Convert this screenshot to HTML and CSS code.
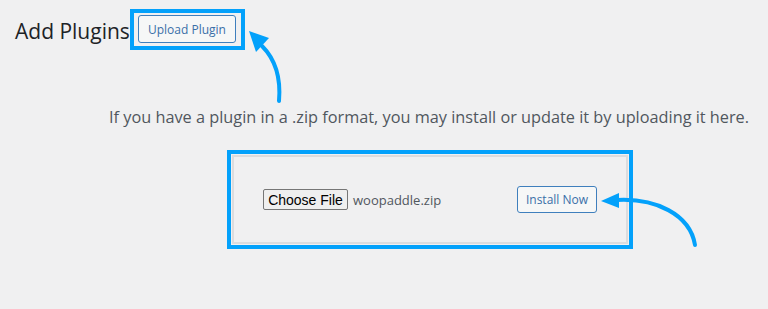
FILE: index.html
```html
<!DOCTYPE html>
<html lang="en">

<head>
  <meta charset="UTF-8">
  <title>Add Plugins</title>
  <link rel="stylesheet" href="styles.css">
</head>

<body>
  <div class="wrap">
    <div class="title-row">
      <h1 class="page-title">Add Plugins</h1>
      <div class="mark mark-title">
        <a href="#" class="btn-outline btn-upload">Upload Plugin</a>
      </div>
    </div>

    <p class="upload-help">If you have a plugin in a .zip format, you may install or update it by uploading it here.</p>

    <div class="mark mark-form">
      <form class="upload-form" action="#">
        <button type="button" class="file-btn">Choose File</button>
        <span class="file-name">woopaddle.zip</span>
        <button type="button" class="btn-outline btn-install">Install Now</button>
      </form>
    </div>
  </div>

  <!-- annotation arrows -->
  <svg class="arrows" width="768" height="309" viewBox="0 0 768 309">
    <path d="M279 101 C281 78 276 60 262 46" />
    <polygon points="249,31 269,38 256,52" />
    <path d="M617 200 C655 198 690 214 695 245" />
    <polygon points="601,201 619,193 619,208" />
  </svg>
</body>

</html>
```

FILE: styles.css
```css
body {
  margin: 0;
  background: #f0f0f1;
  font-family: "Open Sans", "Noto Sans", sans-serif;
  color: #3c434a;
  position: relative;
  height: 309px;
  overflow: hidden;
}

.wrap {
  padding: 9px 0 0 15px;
}

.title-row {
  display: flex;
  align-items: center;
}

.page-title {
  margin: 0;
  width: 115px;
  font-size: 21px;
  font-weight: 400;
  color: #1d2327;
  white-space: nowrap;
  padding-top: 2px;
}

.mark {
  border: 4px solid #03a1fb;
  box-sizing: border-box;
}

.mark-title {
  display: flex;
  padding: 2px 5px 3px 4px;
}

.btn-outline {
  display: inline-flex;
  align-items: center;
  justify-content: center;
  box-sizing: border-box;
  border: 1px solid #3f7fbd;
  border-radius: 3px;
  background: #f6f7f7;
  color: #3a6fa8;
  font-family: "Open Sans", "Noto Sans", sans-serif;
  font-size: 12px;
  text-decoration: none;
}

.btn-upload {
  width: 98px;
  height: 28px;
}

.upload-help {
  margin: 56px 0 0 94px;
  font-size: 16.3px;
  line-height: 22px;
  color: #50575e;
  white-space: nowrap;
}

.mark-form {
  margin: 22px 0 0 212px;
  width: 406px;
  height: 99px;
  padding: 1px;
}

.upload-form {
  margin: 0;
  box-sizing: border-box;
  height: 100%;
  border: 2px solid #dcdcde;
  display: flex;
  align-items: center;
  padding: 0 0 0 29px;
}

.file-btn {
  box-sizing: border-box;
  height: 21px;
  width: 85px;
  padding: 0;
  border: 1px solid #767676;
  border-radius: 2px;
  background: #efefef;
  color: #000;
  font-family: "Liberation Sans", Arial, sans-serif;
  font-size: 14px;
}

.file-name {
  margin-left: 5px;
  width: 84px;
  font-size: 13px;
  color: #50575e;
  white-space: nowrap;
}

.btn-install {
  margin-left: 80px;
  width: 80px;
  height: 27px;
  font-size: 12px;
}

.arrows {
  position: absolute;
  left: 0;
  top: 0;
  pointer-events: none;
}

.arrows path {
  fill: none;
  stroke: #03a1fb;
  stroke-width: 4;
  stroke-linecap: round;
}

.arrows polygon {
  fill: #03a1fb;
}
```
